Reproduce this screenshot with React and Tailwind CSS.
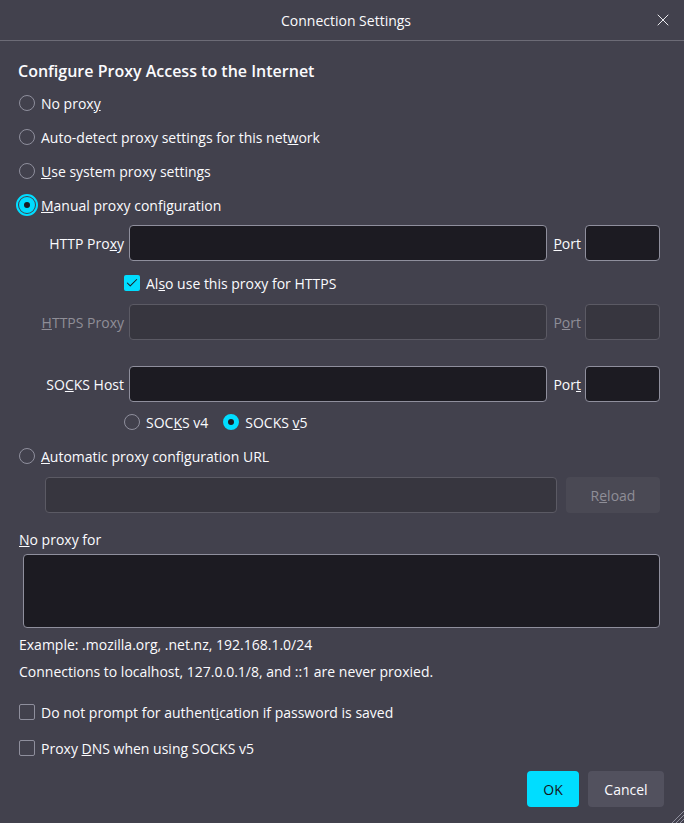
import { Check, X } from 'lucide-react'

function Radio({ checked, focus, children, className = '' }) {
  return (
    <div className={`flex items-center ${className}`}>
      <span
        className={`w-4 h-4 rounded-full shrink-0 box-border ${
          checked ? 'border-[5px] border-[#00ddff] bg-[#1c1b22]' : 'border border-[#8f8f9d]'
        } ${focus ? 'outline-2 outline-offset-1 outline-[#00ddff]' : ''}`}
      />
      <span className="ml-[6px]">{children}</span>
    </div>
  )
}

function Checkbox({ checked, children, className = '' }) {
  return (
    <div className={`flex items-center ${className}`}>
      {checked ? (
        <span className="w-4 h-4 rounded-[2px] bg-[#00ddff] flex items-center justify-center shrink-0">
          <Check size={14} strokeWidth={1.8} color="#1c1b22" />
        </span>
      ) : (
        <span className="w-4 h-4 rounded-[2px] border border-[#8f8f9d] shrink-0" />
      )}
      <span className="ml-[6px]">{children}</span>
    </div>
  )
}

function ProxyRow({ label, port, disabled, className = '' }) {
  const text = disabled ? 'text-[#8f8e97]' : 'text-[#fbfbfe]'
  const box = disabled
    ? 'bg-[#37363f] border-[#5b5a64]'
    : 'bg-[#1c1b22] border-[#8f8f9d]'
  return (
    <div className={`flex items-center h-[36px] pl-[19px] pr-[24px] ${className}`}>
      <span className={`w-[105px] text-right ${text}`}>{label}</span>
      <div className={`ml-[5px] flex-1 h-full rounded-[4px] border ${box}`} />
      <span className={`ml-[6px] ${text}`}>{port}</span>
      <div className={`ml-[4px] w-[75px] h-full rounded-[4px] border ${box}`} />
    </div>
  )
}

export default function App() {
  return (
    <div className="w-[684px] h-[823px] bg-[#42414d] text-[#fbfbfe] text-[14px] font-['Open_Sans',sans-serif] relative overflow-hidden">
      <div className="h-[41px] border-b border-[#6c6b76] flex items-center justify-center relative">
        <span className="ml-[8px]">Connection Settings</span>
        <X size={20} strokeWidth={1.1} className="absolute right-[11px] top-[10px]" />
      </div>

      <div className="pt-[18px]">
        <div className="h-[24px] flex items-center pl-[18px] text-[16px] font-semibold">
          Configure Proxy Access to the Internet
        </div>
        <div className="mt-[3px] pl-[19px]">
          <Radio className="h-[34px]">No prox<u>y</u></Radio>
          <Radio className="h-[34px]">Auto-detect proxy settings for this net<u>w</u>ork</Radio>
          <Radio className="h-[34px]"><u>U</u>se system proxy settings</Radio>
          <Radio className="h-[34px]" checked focus><u>M</u>anual proxy configuration</Radio>
        </div>

        <ProxyRow className="mt-[3px]" label={<>HTTP Pro<u>x</u>y</>} port={<><u>P</u>ort</>} />
        <Checkbox className="mt-[4px] h-[36px] pl-[124px]" checked>
          Al<u>s</u>o use this proxy for HTTPS
        </Checkbox>
        <ProxyRow className="mt-[3px]" disabled label={<><u>H</u>TTPS Proxy</>} port={<>P<u>o</u>rt</>} />
        <ProxyRow className="mt-[26px]" label={<>SO<u>C</u>KS Host</>} port={<>Por<u>t</u></>} />

        <div className="mt-[6px] h-[28px] pl-[124px] flex items-center">
          <Radio>SOC<u>K</u>S v4</Radio>
          <Radio className="ml-[15px]" checked>SOCKS <u>v</u>5</Radio>
        </div>

        <Radio className="mt-[6px] h-[28px] pl-[19px]"><u>A</u>utomatic proxy configuration URL</Radio>

        <div className="mt-[7px] h-[36px] flex pl-[45px] pr-[24px]">
          <div className="flex-1 h-full rounded-[4px] border border-[#5b5a64] bg-[#37363f]" />
          <div className="ml-[9px] w-[94px] h-full rounded-[4px] bg-[#4a4954] text-[#8f8e97] flex items-center justify-center">
            R<u>e</u>load
          </div>
        </div>

        <div className="mt-[14px] h-[24px] flex items-center pl-[19px]">
          <span><u>N</u>o proxy for</span>
        </div>
        <div className="mt-[3px] ml-[23px] mr-[24px] h-[74px] rounded-[4px] border border-[#8f8f9d] bg-[#1c1b22]" />

        <div className="mt-[4px] h-[24px] flex items-center pl-[19px]">
          Example: .mozilla.org, .net.nz, 192.168.1.0/24
        </div>
        <div className="mt-[3px] h-[24px] flex items-center pl-[19px]">
          Connections to localhost, 127.0.0.1/8, and ::1 are never proxied.
        </div>

        <Checkbox className="mt-[15px] h-[28px] pl-[19px]">
          Do not prompt for authent<u>i</u>cation if password is saved
        </Checkbox>
        <Checkbox className="mt-[8px] h-[28px] pl-[19px]">
          Proxy <u>D</u>NS when using SOCKS v5
        </Checkbox>

        <div className="mt-[9px] h-[36px] flex justify-end pr-[20px]">
          <button className="w-[52px] h-full rounded-[4px] bg-[#00ddff] text-[#15141a]">OK</button>
          <button className="ml-[9px] w-[76px] h-full rounded-[4px] bg-[#52515e] text-[#fbfbfe]">Cancel</button>
        </div>
      </div>

      <svg className="absolute right-0 bottom-0" width="14" height="14" viewBox="0 0 14 14">
        <path d="M14 2 L2 14 M14 6 L6 14 M14 10 L10 14" stroke="#8f8f9d" strokeWidth="1" />
      </svg>
    </div>
  )
}
